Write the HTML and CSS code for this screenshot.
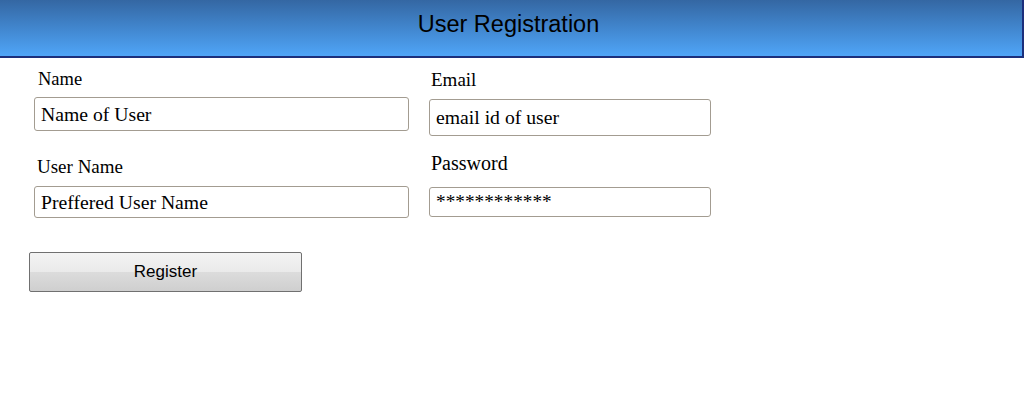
FILE: index.html
```html
<!DOCTYPE html>
<html lang="en">
<head>
<meta charset="utf-8">
<title>User Registration</title>
<link rel="stylesheet" href="styles.css">
</head>
<body>
<header class="topbar">User Registration</header>
<form class="reg-form" onsubmit="return false;">
  <div class="fields">
    <div class="col col-left">
      <label class="lbl lbl-name" for="name">Name</label>
      <input class="box box-name" id="name" type="text" value="Name of User">
      <label class="lbl lbl-user" for="uname">User Name</label>
      <input class="box box-user" id="uname" type="text" value="Preffered User Name">
    </div>
    <div class="col col-right">
      <label class="lbl lbl-email" for="email">Email</label>
      <input class="box box-email" id="email" type="text" value="email id of user">
      <label class="lbl lbl-pass" for="pass">Password</label>
      <input class="box box-pass" id="pass" type="text" value="************">
    </div>
  </div>
  <button class="btn" type="submit">Register</button>
</form>
</body>
</html>
```

FILE: styles.css
```css
html, body {
  margin: 0;
  padding: 0;
  background: #ffffff;
}

body {
  font-family: "Liberation Serif", "Times New Roman", serif;
  color: #000;
}

.topbar {
  height: 48px;
  padding: 0 5px 8px 0;
  line-height: 48px;
  text-align: center;
  font-family: "Liberation Sans", Arial, sans-serif;
  font-size: 23.5px;
  color: #000;
  background: linear-gradient(to bottom, #3467a3 0%, #4fa5f8 100%);
  border-bottom: 2px solid #1c2f7c;
  border-right: 2px solid #1c2f7c;
}

.reg-form {
  display: flex;
  flex-direction: column;
  align-items: flex-start;
}

.fields {
  display: grid;
  grid-template-columns: 375px 282px;
  column-gap: 20px;
  margin-left: 34px;
}

.col {
  display: flex;
  flex-direction: column;
  align-items: stretch;
}

.lbl {
  display: block;
  font-size: 19px;
  line-height: 20px;
}

.box {
  box-sizing: border-box;
  width: 100%;
  margin: 0;
  padding: 0 6px;
  border: 1px solid #a39c91;
  border-radius: 3px;
  font: 19.7px "Liberation Serif", "Times New Roman", serif;
  color: #000;
  background: #fff;
  outline: none;
}

/* left column */
.lbl-name { margin-top: 11px; padding-left: 4px; font-size: 18.5px; }
.box-name { margin-top: 8px; height: 34px; }
.lbl-user { margin-top: 26px; padding-left: 3px; }
.box-user { margin-top: 9px; height: 32px; }

/* right column */
.lbl-email { margin-top: 12px; padding-left: 2px; }
.box-email { margin-top: 9px; height: 37px; }
.lbl-pass { margin-top: 17px; padding-left: 2px; font-size: 20px; }
.box-pass { margin-top: 14px; height: 30px; font-size: 19.3px; }

.btn {
  box-sizing: border-box;
  margin: 34px 0 0 29px;
  width: 273px;
  height: 40px;
  padding: 0;
  border: 1px solid #707070;
  border-radius: 2px;
  font-family: "Liberation Sans", Arial, sans-serif;
  font-size: 17px;
  color: #000;
  background: linear-gradient(to bottom, #f3f3f3 0%, #eaeaea 50%, #dcdcdc 50%, #cfcfcf 100%);
  cursor: pointer;
}
```
